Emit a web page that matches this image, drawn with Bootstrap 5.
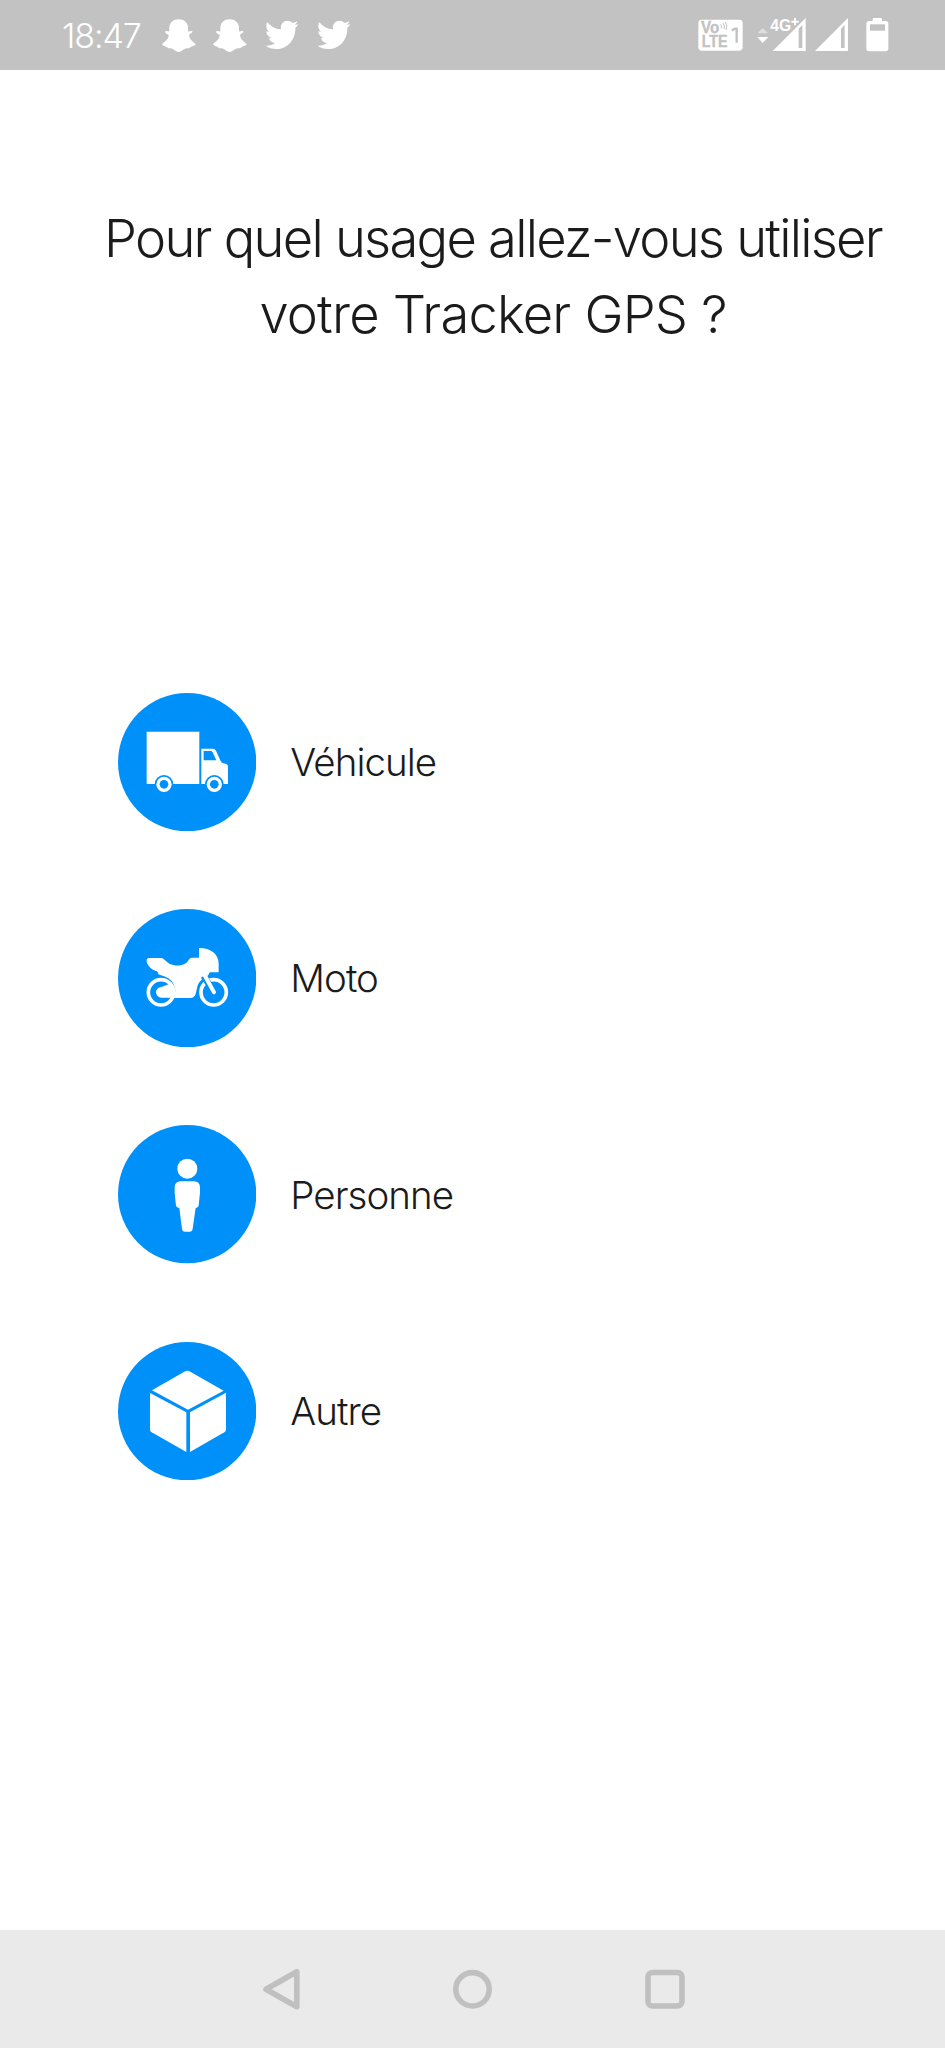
<!DOCTYPE html>
<html lang="fr">
<head>
<meta charset="utf-8">
<meta name="viewport" content="width=device-width, initial-scale=1">
<title>Tracker GPS</title>
<link href="https://cdn.jsdelivr.net/npm/bootstrap@5.3.0/dist/css/bootstrap.min.css" rel="stylesheet">
<style>
body { font-family: "Inter", "Liberation Sans", sans-serif; font-weight: 300; color: #1b1b1b; background: #fff; }
svg { display: block; flex: none; }
.screen { height: 2048px; }
.status-bar { height: 70px; background: #c2c2c2; color: #fff; padding: 0 56px 0 62px; }
.clock { font-size: 34px; line-height: 70px; width: 99.7px; letter-spacing: -1.1px; white-space: nowrap; padding-top: 1px; }
.notifs { gap: 17.7px; }
.question { font-size: 52.5px; line-height: 76px; font-weight: 300; letter-spacing: -1.75px; padding: 130px 0 0 41px; height: 623px; margin: 0; }
.question .second-line { letter-spacing: -.8px; }
.choices { gap: 77.9px; padding-left: 118px; }
.choice { gap: 34px; font-size: 38.5px; line-height: 50px; letter-spacing: -.95px; color: inherit; }
.choice svg { width: 138.3px; height: 138.3px; }
.nav-keys { height: 118px; background: #eaeaea; }
</style>
</head>
<body>
<div class="screen d-flex flex-column">
  <header class="status-bar d-flex align-items-center">
    <div class="clock">18:47</div>
    <svg width="0" height="0" class="position-absolute">
      <defs>
        <path id="ghost" d="M50 58C66 58 77 68 78 82L78 94C82 95 88 91 91 94C93 98 84 102 81 104C82 117 91 124 101 132C99 138 89 138 85 142C83 145 80 145 76 145C66 144 61 156 50 156C39 156 34 144 24 145C20 145 18 145 15 142C11 138 2 138 0 132C10 124 20 117 20 104C16 102 8 98 9 95C12 91 18 95 22 94L22 82C23 68 34 58 50 58Z"/>
        <path id="bird" d="M1 137C12 138 22 135 30 129C21 128 14 123 12 115L20 114C10 111 4 103 4 94L13 96C4 89 1 78 7 67C17 80 31 87 48 88C45 72 56 62 68 62C75 62 79 65 84 69L97 64C95 69 93 72 89 75L100 73C98 77 95 80 91 83C92 119 67 147 34 147C21 147 10 143 1 137Z"/>
      </defs>
    </svg>
    <div class="notifs d-flex">
      <svg width="34" height="70" viewBox="0 0 102 210" fill="#fff"><use href="#ghost"/></svg>
      <svg width="34" height="70" viewBox="0 0 102 210" fill="#fff"><use href="#ghost"/></svg>
      <svg width="34" height="70" viewBox="0 0 102 210" fill="#fff"><use href="#bird"/></svg>
      <svg width="34" height="70" viewBox="0 0 102 210" fill="#fff"><use href="#bird"/></svg>
    </div>
    <div class="d-flex ms-auto">
      <svg width="45" height="70" viewBox="50 0 135 210" font-family="Liberation Sans, sans-serif">
        <rect x="51" y="59" width="133" height="93" rx="10" fill="#fff"/>
        <g fill="#c2c2c2" font-weight="700" stroke="#c2c2c2" stroke-width="1">
          <text x="59" y="99" font-size="47" textLength="55" lengthAdjust="spacingAndGlyphs">Vo</text>
          <text x="61" y="141" font-size="48" textLength="78" lengthAdjust="spacingAndGlyphs">LTE</text>
        </g>
        <path d="M118 73q5 6 2 12M125 69q7 9 3 18M132 66q8 11 2 24" fill="none" stroke="#c2c2c2" stroke-width="3"/>
        <path d="M151 91L162 86L166 86L166 128" fill="none" stroke="#c2c2c2" stroke-width="7"/>
      </svg>
      <svg width="50.5" height="70" viewBox="225 0 151.5 210" style="margin-left:13.3px" fill="#fff">
        <path d="M229 100L245 84L261 100Z" opacity=".45"/>
        <path d="M229 111L262 111L245 129Z"/>
        <path d="M374 54L374 153L275 153Z"/>
        <path d="M353 86L364 75L364 144L353 144Z" fill="#c2c2c2"/>
        <path d="M331 65H354M342.500 54V77" stroke="#c2c2c2" stroke-width="12"/>
        <text x="268" y="93" font-family="Liberation Sans, sans-serif" font-size="51" font-weight="700" textLength="63" lengthAdjust="spacingAndGlyphs" stroke="#c2c2c2" stroke-width="4" paint-order="stroke">4G</text>
        <path d="M331 65H353M342 54V76" stroke="#fff" stroke-width="6"/>
      </svg>
      <svg width="33.300" height="70" viewBox="403 0 100 210" style="margin-left:8.800px" fill="#fff">
        <path d="M502 54L502 153L403 153Z"/>
        <path d="M481 86L492 75L492 144L481 144Z" fill="#c2c2c2"/>
      </svg>
      <svg width="23" height="70" viewBox="555 0 69 210" style="margin-left:17.300px" fill="#fff">
        <rect x="575" y="54" width="28" height="14" rx="3"/>
        <rect x="556" y="63" width="66" height="91" rx="9"/>
        <rect x="567" y="73" width="45" height="19" fill="#c2c2c2"/>
      </svg>
    </div>
  </header>

  <main class="flex-grow-1 d-flex flex-column">
    <h1 class="question text-center">Pour quel usage allez-vous utiliser<br><span class="second-line">votre Tracker GPS ?</span></h1>
    <div class="choices d-flex flex-column">
      <a class="choice d-flex align-items-center text-decoration-none" href="#">
        <svg viewBox="24 39 415 415" fill="#fff">
          <circle cx="231.500" cy="246.500" r="207.500" fill="#0090fa"/>
          <path d="M110 155H268V312H110Z"/>
          <path d="M274 206H309Q315 206 318 212L332 243Q334 247 338 249L349 252Q354 254 354 259V312H274Z"/>
          <path d="M281 213H302Q306 213 308 217L319 241H281Z" fill="#0090fa"/>
          <g fill="#0090fa"><circle cx="162" cy="313" r="28"/><circle cx="313" cy="313" r="28"/></g>
          <circle cx="162" cy="313" r="23"/><circle cx="313" cy="313" r="23"/>
          <g fill="#0090fa"><circle cx="162" cy="313" r="13"/><circle cx="313" cy="313" r="13"/></g>
        </svg>
        <span>Véhicule</span>
      </a>
      <a class="choice d-flex align-items-center text-decoration-none" href="#">
        <svg viewBox="24 27 415 415" fill="#fff">
          <circle cx="231.500" cy="234.500" r="207.500" fill="#0090fa"/>
          <circle cx="153" cy="277" r="38" fill="none" stroke="#fff" stroke-width="11"/>
          <path d="M154 261L184 250L192 293H154A16 16 0 0 1 154 261Z"/>
          <path d="M116 174H154C162 175 168 185 178 191C193 198 213 198 225 191C235 186 236 174 246 173H267V144C303 144 326 162 326 191V217H300C296 221 297 225 291 230C275 235 263 249 261 265L257 282C254 290 249 294 241 294H188L196 273C195 252 182 234 160 228L145 223C146 213 139 214 129 209C118 203 109 190 110 180Q110 175 116 174Z"/>
          <circle cx="311" cy="277" r="38" fill="none" stroke="#0090fa" stroke-width="19"/>
          <circle cx="311" cy="277" r="38" fill="none" stroke="#fff" stroke-width="11"/>
          <path d="M281 228L312 277" stroke="#0090fa" stroke-width="19"/>
          <path d="M284 226L312 277" stroke="#fff" stroke-width="12" stroke-linecap="round"/>
        </svg>
        <span>Moto</span>
      </a>
      <a class="choice d-flex align-items-center text-decoration-none" href="#">
        <svg viewBox="24 31 415 415" fill="#fff">
          <circle cx="231.500" cy="238.500" r="207.500" fill="#0090fa"/>
          <circle cx="232" cy="162" r="30"/>
          <path d="M212 200H252Q269 201 270 217V234L266 273Q265 279 257 280L248 342Q247 351 239 351H225Q217 351 216 342L208 280Q199 279 198 273L194 234V217Q195 201 212 200Z"/>
        </svg>
        <span>Personne</span>
      </a>
      <a class="choice d-flex align-items-center text-decoration-none" href="#">
        <svg viewBox="24 35 415 415" fill="#fff">
          <circle cx="231.500" cy="242.500" r="207.500" fill="#0090fa"/>
          <path d="M126 180L223 124Q232 118 241 124L341 181L234 238Z"/>
          <path d="M120 188L229 246V365L125 306Q120 303 120 298Z"/>
          <path d="M348 187L240 246V365L343 306Q348 303 348 298Z"/>
        </svg>
        <span>Autre</span>
      </a>
    </div>
  </main>

  <nav class="nav-keys" aria-label="Navigation">
    <svg class="w-100" height="118" viewBox="0 0 945 118" fill="none" stroke="#c0c0c0" stroke-width="5.600" stroke-linejoin="round">
      <path d="M266 59.300L296.800 41.800V76.700Z"/>
      <circle cx="472.500" cy="59.300" r="16.700"/>
      <rect x="648" y="42.500" width="34" height="33.500" rx="4.500"/>
    </svg>
  </nav>
</div>
<script src="https://cdn.jsdelivr.net/npm/bootstrap@5.3.0/dist/js/bootstrap.bundle.min.js"></script>
</body>
</html>
